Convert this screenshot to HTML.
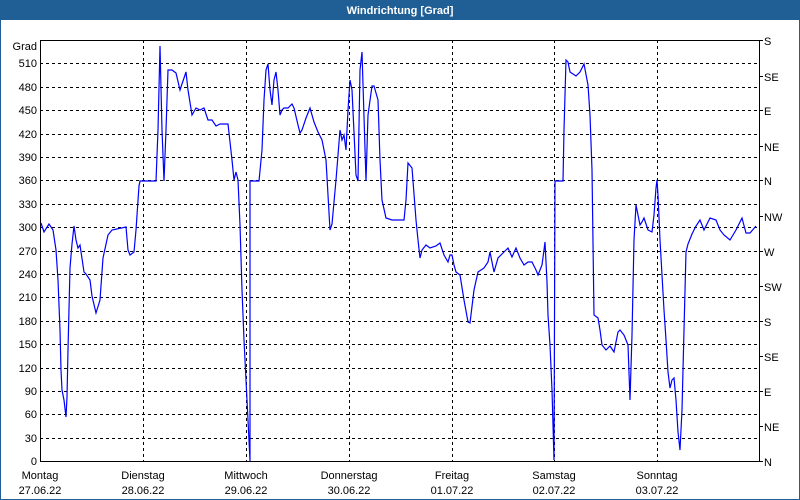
<!DOCTYPE html>
<html><head><meta charset="utf-8"><style>
html,body{margin:0;padding:0;width:800px;height:500px;overflow:hidden;background:#fff}
</style></head><body>
<svg width="800" height="500" xmlns="http://www.w3.org/2000/svg" font-family="Liberation Sans, sans-serif" font-size="11">
<rect x="0" y="0" width="800" height="500" fill="#fff"/>
<rect x="0.5" y="0.5" width="799" height="499" fill="none" stroke="#1f5f96"/>
<rect x="0" y="0" width="800" height="20" fill="#1f5f96"/>
<text x="400" y="14" fill="#fff" font-weight="bold" text-anchor="middle">Windrichtung [Grad]</text>
<g stroke="#000" stroke-dasharray="3,3" stroke-width="1">
<path d="M40 63.5H759M40 87.5H759M40 110.5H759M40 134.5H759M40 157.5H759M40 180.5H759M40 204.5H759M40 227.5H759M40 251.5H759M40 274.5H759M40 297.5H759M40 321.5H759M40 344.5H759M40 368.5H759M40 391.5H759M40 414.5H759M40 438.5H759"/>
<path d="M143.5 40V461M246.5 40V461M349.5 40V461M452.5 40V461M554.5 40V461M657.5 40V461"/>
</g>
<path d="M40.5 40V461.5H759.5V40M40 40.5H759.5" fill="none" stroke="#000"/>
<g stroke="#000"><path d="M759 40.5h4M759 76.5h4M759 110.5h4M759 146.5h4M759 180.5h4M759 216.5h4M759 251.5h4M759 286.5h4M759 321.5h4M759 356.5h4M759 391.5h4M759 426.5h4M759 461.5h4"/></g>
<g text-anchor="end" fill="#000">
<text x="37" y="50">Grad</text>
<text x="37" y="67">510</text><text x="37" y="91">480</text><text x="37" y="114">450</text><text x="37" y="138">420</text><text x="37" y="161">390</text><text x="37" y="184">360</text><text x="37" y="208">330</text><text x="37" y="231">300</text><text x="37" y="255">270</text><text x="37" y="278">240</text><text x="37" y="301">210</text><text x="37" y="325">180</text><text x="37" y="348">150</text><text x="37" y="372">120</text><text x="37" y="395">90</text><text x="37" y="418">60</text><text x="37" y="442">30</text><text x="37" y="465">0</text>
</g>
<g fill="#000">
<text x="764" y="45">S</text><text x="764" y="81">SE</text><text x="764" y="115">E</text><text x="764" y="151">NE</text><text x="764" y="185">N</text><text x="764" y="221">NW</text><text x="764" y="256">W</text><text x="764" y="291">SW</text><text x="764" y="326">S</text><text x="764" y="361">SE</text><text x="764" y="396">E</text><text x="764" y="431">NE</text><text x="764" y="466">N</text>
</g>
<g text-anchor="middle" fill="#000">
<text x="40" y="479">Montag</text><text x="40" y="494">27.06.22</text>
<text x="143" y="479">Dienstag</text><text x="143" y="494">28.06.22</text>
<text x="246" y="479">Mittwoch</text><text x="246" y="494">29.06.22</text>
<text x="349" y="479">Donnerstag</text><text x="349" y="494">30.06.22</text>
<text x="452" y="479">Freitag</text><text x="452" y="494">01.07.22</text>
<text x="554" y="479">Samstag</text><text x="554" y="494">02.07.22</text>
<text x="657" y="479">Sonntag</text><text x="657" y="494">03.07.22</text>
</g>
<polyline fill="none" stroke="#0000ff" stroke-width="1.2" points="41,223 44,232 49,224 53,230 56,250 58,280 60,330 61,370 62,390 64,400 66,417 67,397 68,350 70,268 72,244 74,226 76,240 78,248 80,245 84,272 86,274 90,280 92,296 96,313 100,300 103,258 108,235 112,230 126,227 128,250 130,255 134,252 136,230 139,186 140,181 156,181 158,130 160,46 162,130 164,181 166,130 168,70 172,70 176,73 180,90 184,78 186,72 188,90 192,115 196,108 200,110 204,108 208,120 212,120 216,126 220,124 228,124 232,160 234,180 236,172 238,180 240,225 242,290 244,340 246,380 248,420 250,461 250,181 259,181 262,150 264,100 266,70 268,64 270,90 272,105 274,80 276,72 278,90 280,115 282,110 284,108 288,108 292,104 294,108 298,125 300,133 302,130 306,118 310,108 314,122 318,132 322,140 326,160 330,230 332,224 336,180 340,130 342,140 344,135 346,150 348,110 350,80 352,90 356,175 358,181 360,70 362,52 366,181 368,115 372,86 374,86 378,100 380,160 382,200 386,218 392,220 404,220 406,200 408,163 412,168 416,220 418,240 420,258 422,250 426,245 430,248 436,246 440,243 444,255 448,262 450,255 452,255 454,265 456,272 460,275 464,300 468,322 470,323 474,290 478,272 484,268 488,262 490,252 494,272 498,258 502,254 506,250 508,248 512,257 516,248 520,258 524,265 528,262 532,262 536,270 538,275 542,265 544,250 545,242 547,282 548,315 550,345 552,390 554,460 555,181 563,181 564,130 566,60 568,62 570,72 576,76 580,72 584,64 588,85 590,115 592,170 594,315 598,318 600,330 602,345 606,350 610,346 614,352 618,332 620,330 624,335 628,345 630,400 632,335 634,240 636,205 638,215 640,225 642,222 644,218 648,230 652,232 654,215 656,188 657,180 658,195 660,240 664,310 666,340 668,372 670,388 672,380 674,378 676,400 678,432 680,450 682,410 684,330 686,252 688,244 692,234 696,226 700,220 704,230 710,218 716,220 720,230 724,235 730,240 736,230 742,218 746,233 750,233 756,226"/>
</svg>
</body></html>
